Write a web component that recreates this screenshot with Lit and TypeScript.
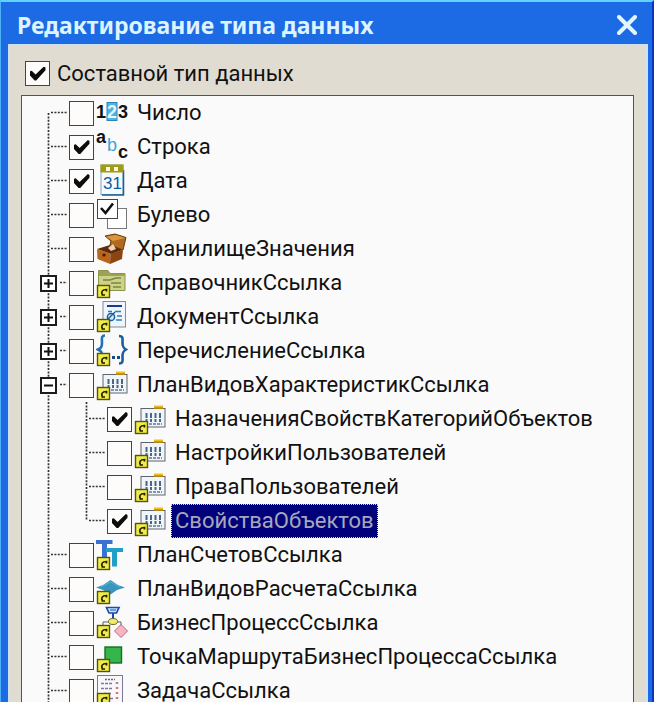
import { LitElement, html, svg, css, nothing, TemplateResult } from "lit";
import { customElement, property, state } from "lit/decorators.js";

interface TypeNode {
  name: string;
  icon: string;
  checked?: boolean;
  selected?: boolean;
  expandable?: boolean;
  children?: TypeNode[];
}

const TYPES: TypeNode[] = [
  { name: "Число", icon: "number" },
  { name: "Строка", icon: "string", checked: true },
  { name: "Дата", icon: "date", checked: true },
  { name: "Булево", icon: "bool" },
  { name: "ХранилищеЗначения", icon: "storage" },
  { name: "СправочникСсылка", icon: "catalog", expandable: true },
  { name: "ДокументСсылка", icon: "document", expandable: true },
  { name: "ПеречислениеСсылка", icon: "enum", expandable: true },
  {
    name: "ПланВидовХарактеристикСсылка",
    icon: "kinds",
    expandable: true,
    children: [
      { name: "НазначенияСвойствКатегорийОбъектов", icon: "kinds", checked: true },
      { name: "НастройкиПользователей", icon: "kinds" },
      { name: "ПраваПользователей", icon: "kinds" },
      { name: "СвойстваОбъектов", icon: "kinds", checked: true, selected: true },
    ],
  },
  { name: "ПланСчетовСсылка", icon: "accounts" },
  { name: "ПланВидовРасчетаСсылка", icon: "calc" },
  { name: "БизнесПроцессСсылка", icon: "process" },
  { name: "ТочкаМаршрутаБизнесПроцессаСсылка", icon: "point" },
  { name: "ЗадачаСсылка", icon: "task" },
];

const badge = svg`
  <rect x="1.5" y="19.5" width="12" height="12" fill="#f0ec48" stroke="#55520c" stroke-width="1.4"/>
  <path d="M5.5 29 H9 M6.500 29 C4.800 26 6 23.500 10.500 23.500 V25.500" fill="none" stroke="#222000" stroke-width="1.700"/>`;

const ICONS: Record<string, TemplateResult> = {
  number: svg`
    <rect x="11" y="6.5" width="10" height="18" fill="#4fb4e2" stroke="#2a87bb"/>
    <g font-family="Liberation Sans, sans-serif" font-weight="700" font-size="18">
      <text x="0" y="22" fill="#111">1</text>
      <text x="11" y="22" fill="#e4f6ff">2</text>
      <text x="22" y="22" fill="#111">3</text>
    </g>`,
  string: svg`
    <g font-family="Liberation Sans, sans-serif" font-weight="700" font-size="18">
      <text x="0" y="13" fill="#111">a</text>
      <text x="11" y="21" fill="#3aa5dc" font-weight="400">b</text>
      <text x="22" y="28" fill="#111">c</text>
    </g>`,
  date: svg`
    <rect x="5" y="1" width="22" height="29.5" fill="#f4faff" stroke="#7aa6c4"/>
    <path d="M27.5 6 V31 H6" fill="none" stroke="#1b5f90" stroke-width="1.5"/>
    <rect x="4.5" y="0.5" width="23" height="8" fill="#a39c12"/>
    <path d="M10 3h4v4h-4z M18 3h4v4h-4z" fill="#fffbe0"/>
    <text x="7" y="25" font-family="Liberation Sans, sans-serif" font-size="17" fill="#0f5c9c">31</text>`,
  bool: svg`
    <rect x="11.5" y="10.5" width="19" height="20" fill="#fff" stroke="#777"/>
    <rect x="1.5" y="1.5" width="20" height="19" fill="#fff" stroke="#444"/>
    <path d="M5 10 L9.5 15 L17 5.5" fill="none" stroke="#111" stroke-width="2.6"/>`,
  storage: svg`
    <path d="M9 4 L19 2 L30 5.5 L27 18 L14 13 L15 9 Z" fill="#b06a20" stroke="#6b3a0c"/>
    <path d="M10 4.5 L20 3 L29 6 L17 9 Z" fill="#d9963c"/>
    <path d="M1 17 L14 13 L27 18 L15 22 Z" fill="#5a2c0a"/>
    <path d="M12 16 L17 12 L20 17 L15 19 Z" fill="#f2d0b8"/>
    <path d="M1 17 L14.5 21.5 L14 32 L1.5 27 Z" fill="#b9651c"/>
    <path d="M14.5 21.5 L27 18 L26 27 L14 32 Z" fill="#8c4510"/>
    <circle cx="8" cy="23" r="1.6" fill="#3a1c04"/>`,
  catalog: svg`
    <path d="M2.5 4.5 H12 L14 7.5 H29 V24.5 H2.5 Z" fill="#cdd28a" stroke="#8c9448"/>
    <path d="M3 5 H12 L14 8 H29 V10 H3 Z" fill="#9ca352"/>
    <path d="M7 14 H14 L20 12 H25 M15 17 H25 M17 21 H25" fill="none" stroke="#7c8440" stroke-width="1.4"/>
    ${badge}`,
  document: svg`
    <rect x="7" y="1.5" width="22.5" height="25.5" fill="#eef5fc" stroke="#7c8ba0"/>
    <path d="M11 6 H26" stroke="#173d86" stroke-width="2"/>
    <path d="M12 11.5 H16 M19 11.5 H25 M21 16 H26 M20 20 H26" stroke="#2f7cc0" stroke-width="1.5"/>
    <circle cx="15" cy="17" r="3.6" fill="#d4ebfa" stroke="#17609c" stroke-width="1.5"/>
    <path d="M9 22 L19 12" stroke="#17609c" stroke-width="1.5"/>
    ${badge}`,
  enum: svg`
    <path d="M9 1.5 C5 1.5 6 5 6 9 C6 13 5 14 2 15.5 C5 17 6 18 6 22" fill="none" stroke="#2671b5" stroke-width="2.6"/>
    <path d="M23 2 C27.5 2 26.5 5 26.5 9 C26.5 13 27.5 14 30 15.5 C27.5 17 26.5 18 26.5 22 C26.5 27 27.5 29.5 23 29.5" fill="none" stroke="#1d5c9e" stroke-width="2.6"/>
    <path d="M16 22h3v3h-3z M21 22h3v3h-3z" fill="#174a86"/>
    ${badge}`,
  kinds: svg`
    <path d="M20 3.5 H29 V7 H20 Z" fill="#eec21c"/>
    <rect x="7" y="6.5" width="24" height="18.5" fill="#f0f5fa" stroke="#60656c"/>
    <path d="M20 6 H29" stroke="#c98a10" stroke-width="1.6"/>
    <path d="M12.5 11 V20 M17 11 V20 M21.5 11 V20 M26 11 V20" stroke="#4a6684" stroke-width="2" stroke-dasharray="5 1"/>
    <path d="M11 22 H28" stroke="#5d7894" stroke-width="1.5" stroke-dasharray="3 1"/>
    ${badge}`,
  accounts: svg`
    <path d="M0 2 H16.5 V6 H11 V22 H6 V6 H0 Z" fill="#3b72d2"/>
    <path d="M10 10 H27 V14 H21 V28.5 H16 V14 H10 Z" fill="#1f9fca"/>
    ${badge}`,
  calc: svg`
    <path d="M0 15.500 L7 13 L14.500 8 L22 13 L29 15.500 L21 18 L14.500 22.500 L7 18 Z" fill="#3896be"/>
    <path d="M5 15 L14.5 10 L24 15" fill="none" stroke="#5cb4d6"/>
    ${badge}`,
  process: svg`
    <path d="M10.5 1.5 H23 L20.5 7 H13 Z" fill="#cfe6ff" stroke="#1a4cb0" stroke-width="1.7"/>
    <path d="M14 4 H20" stroke="#1a4cb0"/>
    <path d="M17 7 V12" stroke="#1a4cb0" stroke-width="2"/>
    <path d="M7 20 V16 H25 V20" fill="none" stroke="#555c58"/>
    <ellipse cx="17" cy="15.5" rx="4.5" ry="3" fill="#f0ea70" stroke="#6b6820"/>
    <path d="M25 18.5 L31.5 25 L25 31.5 L18.5 25 Z" fill="#fab4c4" stroke="#b06a7c"/>
    ${badge}`,
  point: svg`
    <rect x="9" y="7" width="16.5" height="16" fill="#35b54a" stroke="#147028" stroke-width="1.4"/>
    ${badge}`,
  task: svg`
    <rect x="1.5" y="1.5" width="25" height="30" fill="#f8f8fc" stroke="#7a7894"/>
    <path d="M9 5.5 H19" stroke="#66667c" stroke-width="1.5" stroke-dasharray="2 1"/>
    <path d="M5 9.5 H16 M5 14.5 H16 M8 19.5 H16 M14 24.5 H17" stroke="#7c7c90" stroke-width="1.5" stroke-dasharray="3 1"/>
    <path d="M21 8 V28" stroke="#d07a6c" stroke-width="2.5" stroke-dasharray="2 3"/>
    ${badge}`,
};

const tickBox = css`
  input {
    appearance: none;
    flex: none;
    box-sizing: border-box;
    width: 25px;
    height: 25px;
    margin: 0;
    border: 1px solid #444;
    background: #fdfcfb;
    display: grid;
    place-items: center;
  }
  input:checked::before {
    content: "";
    width: 16px;
    height: 14px;
    background: #0c0c0c;
    clip-path: polygon(0 36%, 14% 30%, 38% 58%, 90% 0, 100% 8%, 100% 26%, 42% 100%, 32% 100%, 0 60%);
  }
`;

@customElement("type-row")
export class TypeRow extends LitElement {
  @property({ attribute: false }) node!: TypeNode;
  @property({ type: Number }) level = 0;
  @property({ type: Boolean }) first = false;
  @property({ type: Boolean }) last = false;

  static styles = [
    tickBox,
    css`
      :host {
        display: block;
      }
      .row {
        display: flex;
        align-items: center;
        height: 34px;
      }
      .guide,
      .branch {
        flex: none;
        display: grid;
        height: 34px;
      }
      .guide {
        width: 38px;
      }
      .branch {
        width: 29px;
      }
      .branch > * {
        grid-area: 1 / 1;
      }
      .lines {
        display: block;
        fill: none;
        stroke: #333;
      }
      .expander {
        align-self: center;
        width: 17px;
        height: 17px;
        padding: 0;
        border: 2px solid #1c1c1c;
        background: #fff;
        display: grid;
        place-items: center;
      }
      .expander svg {
        display: block;
        stroke: #111;
        stroke-width: 2px;
      }
      label {
        display: flex;
        align-items: center;
        height: 34px;
      }
      .icon {
        flex: none;
        width: 32px;
        height: 34px;
        margin: 0 5px 0 2px;
      }
      .name {
        border: 1px dotted transparent;
        padding: 0 3px;
        font: 22px/32px Roboto, "Liberation Sans", sans-serif;
        color: #111;
        white-space: nowrap;
      }
      .name.selected {
        background: #00007c;
        border-color: #d8d8a0;
        color: #a6a8b8;
      }
    `,
  ];

  private toggle() {
    this.dispatchEvent(new CustomEvent("toggle-node", { bubbles: true, composed: true }));
  }

  render() {
    const { node } = this;
    const open = !!node.children;
    const top = this.first ? 17 : 0;
    const bottom = this.last ? 17 : 34;
    return html`
      <div class="row">
        ${this.level
          ? html`<span class="guide">
              <svg class="lines" width="38" height="34" stroke-width="1.7" stroke-dasharray="2 1.4" aria-hidden="true"><path d="M8.5 0V34" /></svg>
            </span>`
          : nothing}
        <span class="branch">
          <svg class="lines" width="29" height="34" stroke-width="1.7" stroke-dasharray="2 1.4" aria-hidden="true">
            <path d="M8.5 ${top}V${bottom}" />
            <path d="M${node.expandable ? 20 : 11} 16.5H27" />
          </svg>
          ${node.expandable
            ? html`<button class="expander" aria-label=${node.name} aria-expanded=${open} @click=${this.toggle}>
                <svg width="11" height="11" viewBox="0 0 11 11"><path d=${open ? "M1 5.5H10" : "M1 5.5H10M5.5 1V10"} /></svg>
              </button>`
            : nothing}
        </span>
        <label>
          <input type="checkbox" .checked=${!!node.checked} />
          <svg class="icon" viewBox="0 0 32 34" aria-hidden="true">${ICONS[node.icon]}</svg>
          <span class="name ${node.selected ? "selected" : ""}">${node.name}</span>
        </label>
      </div>
    `;
  }
}

@customElement("app-root")
export class AppRoot extends LitElement {
  @state() private open = true;

  static styles = [
    tickBox,
    css`
      :host {
        display: flex;
        flex-direction: column;
        box-sizing: border-box;
        height: 100vh;
        overflow: hidden;
        background: #1c6be4;
        border-top: 2px solid #62d2fa;
        border-left: 1px solid #4cb4f6;
        border-right: 2px solid #0a34c4;
        padding: 0 4px 0 7px;
      }
      header {
        flex: none;
        display: flex;
        align-items: center;
        justify-content: space-between;
        height: 42px;
        padding: 4px 8px 0 9px;
        box-sizing: border-box;
      }
      h1 {
        margin: 0;
        font: 700 23px/30px "Noto Sans", "Open Sans", sans-serif;
        color: #dcf4ff;
        white-space: nowrap;
      }
      .close {
        width: 26px;
        height: 26px;
        padding: 0;
        border: 0;
        background: none;
        display: grid;
        place-items: center;
      }
      .close svg {
        display: block;
        stroke: #e2f6ff;
        stroke-width: 4px;
        stroke-linecap: round;
      }
      main {
        flex: 1;
        min-height: 0;
        display: flex;
        flex-direction: column;
        gap: 9px;
        padding: 16px 12px 0;
        background: #e1dcd1;
        border: 1px solid #cfe2f4;
        border-right-width: 2px;
        border-bottom: 0;
      }
      .composite {
        flex: none;
        display: flex;
        align-items: center;
        gap: 7px;
        height: 25px;
        padding-left: 4px;
        font: 22px/25px Roboto, "Liberation Sans", sans-serif;
        color: #111;
      }
      .tree {
        flex: 1;
        min-height: 0;
        overflow: hidden;
        border: 1px solid #55534c;
        border-bottom: 0;
        background: #fafafa;
        padding-left: 18px;
      }
      ul {
        list-style: none;
        margin: 0;
        padding: 0;
      }
    `,
  ];

  private row(node: TypeNode, level: number, first: boolean, last: boolean): TemplateResult {
    const shown = node.children && !this.open ? { ...node, children: undefined } : node;
    return html`<li>
      <type-row
        .node=${shown}
        .level=${level}
        .first=${first}
        .last=${last}
        @toggle-node=${() => {
          if (node.children) this.open = !this.open;
        }}
      ></type-row>
      ${shown.children
        ? html`<ul>
            ${shown.children.map((c, i, all) => this.row(c, level + 1, false, i === all.length - 1))}
          </ul>`
        : nothing}
    </li>`;
  }

  render() {
    return html`
      <header>
        <h1>Редактирование типа данных</h1>
        <button class="close" aria-label="Закрыть">
          <svg width="20" height="20" viewBox="0 0 20 20"><path d="M2 2L18 18M18 2L2 18" /></svg>
        </button>
      </header>
      <main>
        <label class="composite"><input type="checkbox" checked /><span>Составной тип данных</span></label>
        <div class="tree">
          <ul>
            ${TYPES.map((n, i) => this.row(n, 0, i === 0, false))}
          </ul>
        </div>
      </main>
    `;
  }
}
